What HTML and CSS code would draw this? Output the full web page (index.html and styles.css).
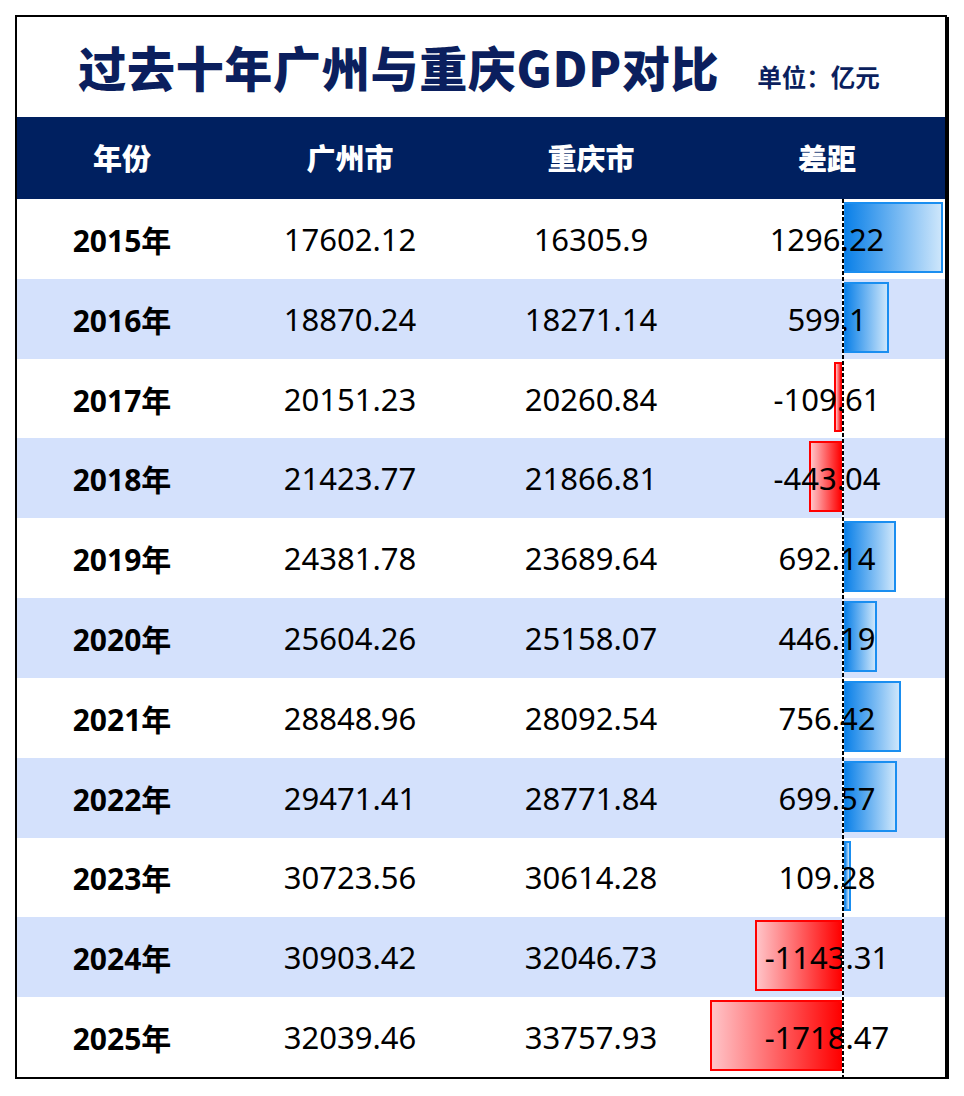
FILE: index.html
```html
<!DOCTYPE html>
<html lang="zh-CN">
<head>
<meta charset="utf-8">
<title>过去十年广州与重庆GDP对比</title>
<link rel="stylesheet" href="styles.css">
</head>
<body>
<div class="sheet">
  <div class="title-bar">
    <h1 class="title">过去十年广州与重庆GDP对比</h1>
    <span class="unit">单位：亿元</span>
  </div>
  <div class="row head">
    <div class="cell">年份</div>
    <div class="cell">广州市</div>
    <div class="cell">重庆市</div>
    <div class="cell">差距</div>
  </div>
  <div class="body">
    <div class="axis"></div>
    <div class="row"><div class="cell year">2015年</div><div class="cell">17602.12</div><div class="cell">16305.9</div><div class="cell diff"><span class="bar pos" style="width:100px"></span><span class="num">1296.22</span></div></div>
    <div class="row alt"><div class="cell year">2016年</div><div class="cell">18870.24</div><div class="cell">18271.14</div><div class="cell diff"><span class="bar pos" style="width:46px"></span><span class="num">599.1</span></div></div>
    <div class="row"><div class="cell year">2017年</div><div class="cell">20151.23</div><div class="cell">20260.84</div><div class="cell diff"><span class="bar neg" style="width:9px"></span><span class="num">-109.61</span></div></div>
    <div class="row alt"><div class="cell year">2018年</div><div class="cell">21423.77</div><div class="cell">21866.81</div><div class="cell diff"><span class="bar neg" style="width:34px"></span><span class="num">-443.04</span></div></div>
    <div class="row"><div class="cell year">2019年</div><div class="cell">24381.78</div><div class="cell">23689.64</div><div class="cell diff"><span class="bar pos" style="width:53px"></span><span class="num">692.14</span></div></div>
    <div class="row alt"><div class="cell year">2020年</div><div class="cell">25604.26</div><div class="cell">25158.07</div><div class="cell diff"><span class="bar pos" style="width:34px"></span><span class="num">446.19</span></div></div>
    <div class="row"><div class="cell year">2021年</div><div class="cell">28848.96</div><div class="cell">28092.54</div><div class="cell diff"><span class="bar pos" style="width:58px"></span><span class="num">756.42</span></div></div>
    <div class="row alt"><div class="cell year">2022年</div><div class="cell">29471.41</div><div class="cell">28771.84</div><div class="cell diff"><span class="bar pos" style="width:54px"></span><span class="num">699.57</span></div></div>
    <div class="row"><div class="cell year">2023年</div><div class="cell">30723.56</div><div class="cell">30614.28</div><div class="cell diff"><span class="bar pos" style="width:8px"></span><span class="num">109.28</span></div></div>
    <div class="row alt"><div class="cell year">2024年</div><div class="cell">30903.42</div><div class="cell">32046.73</div><div class="cell diff"><span class="bar neg" style="width:88px"></span><span class="num">-1143.31</span></div></div>
    <div class="row"><div class="cell year">2025年</div><div class="cell">32039.46</div><div class="cell">33757.93</div><div class="cell diff"><span class="bar neg" style="width:133px"></span><span class="num">-1718.47</span></div></div>
  </div>
</div>
</body>
</html>
```
FILE: styles.css
```css
* { box-sizing: border-box; }

body {
  margin: 0;
  background: #ffffff;
  font-family: "Noto Sans", "Noto Sans CJK SC", sans-serif;
  color: #000;
}

.sheet {
  margin: 15px 0 0 15px;
  width: 932px;
  border: 2px solid #000;
  box-shadow: 2px 2px 0 #000;
  background: #fff;
}

.title-bar {
  height: 100px;
  display: flex;
  justify-content: center;
  align-items: baseline;
  gap: 38px;
  padding-top: 16px;
  padding-right: 4px;
  color: #0b1f5e;
}

.title {
  margin: 0;
  font-family: "Noto Sans CJK SC", sans-serif;
  font-weight: 900;
  font-size: 48px;
  line-height: 66px;
  letter-spacing: 0.7px;
  color: #0b1f5e;
}

.unit {
  font-family: "Noto Sans CJK SC", sans-serif;
  font-weight: 700;
  font-size: 24.5px;
  color: #0b1f5e;
}

.row {
  display: grid;
  grid-template-columns: 210px 246px 236px 236px;
}

.row.head {
  height: 82px;
  background: #002060;
  color: #fff;
  font-family: "Noto Sans CJK SC", sans-serif;
  font-weight: 700;
}

.cell {
  display: flex;
  align-items: center;
  justify-content: center;
  font-size: 31px;
}

.row.head .cell {
  font-size: 29px;
  font-weight: 800;
  padding-bottom: 2px;
}

.body {
  position: relative;
  height: 878px;
  display: grid;
  grid-template-rows: repeat(11, 1fr);
}

.row.alt {
  background: #d4e1fc;
}

.year {
  font-weight: 700;
  font-size: 30px;
  font-family: "Noto Sans", "Noto Sans CJK SC", sans-serif;
}

.diff {
  position: relative;
}

.num {
  position: relative;
  z-index: 2;
}

.bar {
  position: absolute;
  top: 3px;
  bottom: 6px;
  z-index: 1;
  border: 2px solid;
}

.bar.pos {
  left: 134px;
  border-color: #1a8ef0;
  background: linear-gradient(to right, #0a80e8, #cde6fb);
}

.bar.neg {
  right: 102px;
  border-color: #ff0000;
  background: linear-gradient(to right, #ffc4c8, #ff0000);
}

.axis {
  position: absolute;
  top: 0;
  bottom: 0;
  left: 825px;
  width: 2px;
  z-index: 3;
  background: repeating-linear-gradient(to bottom, #000 0 4px, #fff 4px 6px);
}
```
